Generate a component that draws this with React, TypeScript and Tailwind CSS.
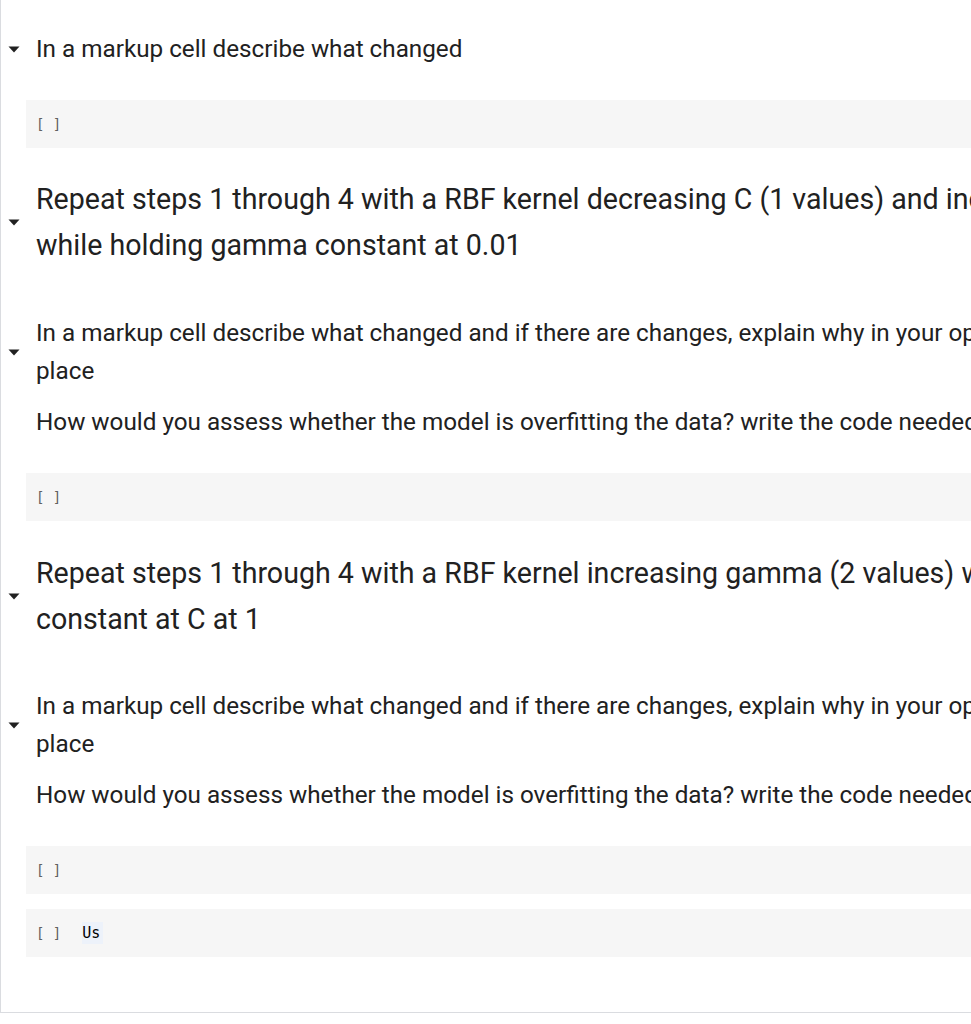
const Caret = () => (
  <svg width="12" height="7" viewBox="0 0 12 7" className="block">
    <path d="M0.5 0.5 L11.5 0.5 L6 6.5 Z" fill="#212121" />
  </svg>
);

const Row = ({ children, className = "" }: { children: React.ReactNode; className?: string }) => (
  <div className={`flex items-center ${className}`}>
    <div className="w-[35px] shrink-0 pl-[7px]">
      <Caret />
    </div>
    <div>{children}</div>
  </div>
);

const CodeCell = ({ code, className = "" }: { code?: string; className?: string }) => (
  <div
    className={`ml-[25px] flex h-[48px] items-center bg-[#f6f6f6] pl-[10px] text-[14px] text-[#616161] ${className}`}
    style={{ fontFamily: '"DejaVu Sans Mono", monospace' }}
  >
    <span>[ ]</span>
    {code && (
      <span className="ml-[21px] bg-[#edf2fa] pr-[3px] text-[15px] leading-[22px] text-[#000]">
        {code}
      </span>
    )}
  </div>
);

export default function App() {
  return (
    <div className="h-[1024px] w-full overflow-hidden bg-white">
      <div
        className="w-[1700px] border-b border-l border-[#dadce0] pb-[55px] text-[#212121]"
        style={{ fontFamily: 'Roboto, "Liberation Sans", sans-serif' }}
      >
        <Row className="pt-[30px]">
          <p className="text-[24.25px] leading-[38px]">In a markup cell describe what changed</p>
        </Row>
        <CodeCell className="mt-[32px]" />

        <Row className="mt-[28px]">
          <h2 className="whitespace-nowrap text-[28.6px] leading-[46px]">
            Repeat steps 1 through 4 with a RBF kernel decreasing C (1 values) and increasing gamma
            (2 values)
            <br />
            while holding gamma constant at 0.01
          </h2>
        </Row>

        <Row className="mt-[46px]">
          <p className="whitespace-nowrap text-[24.25px] leading-[38px]">
            In a markup cell describe what changed and if there are changes, explain why in your opinion
            they took
            <br />
            place
          </p>
        </Row>
        <p className="ml-[35px] mt-[13px] whitespace-nowrap text-[24.25px] leading-[38px]">
          How would you assess whether the model is overfitting the data? write the code needed to
          find out
        </p>
        <CodeCell className="mt-[32px]" />

        <Row className="mt-[29px]">
          <h2 className="whitespace-nowrap text-[28.6px] leading-[46px]">
            Repeat steps 1 through 4 with a RBF kernel increasing gamma (2 values) while holding
            <br />
            constant at C at 1
          </h2>
        </Row>

        <Row className="mt-[45px]">
          <p className="whitespace-nowrap text-[24.25px] leading-[38px]">
            In a markup cell describe what changed and if there are changes, explain why in your opinion
            they took
            <br />
            place
          </p>
        </Row>
        <p className="ml-[35px] mt-[13px] whitespace-nowrap text-[24.25px] leading-[38px]">
          How would you assess whether the model is overfitting the data? write the code needed to
          find out
        </p>
        <CodeCell className="mt-[32px]" />
        <CodeCell className="mt-[15px]" code="Us" />
      </div>
    </div>
  );
}
